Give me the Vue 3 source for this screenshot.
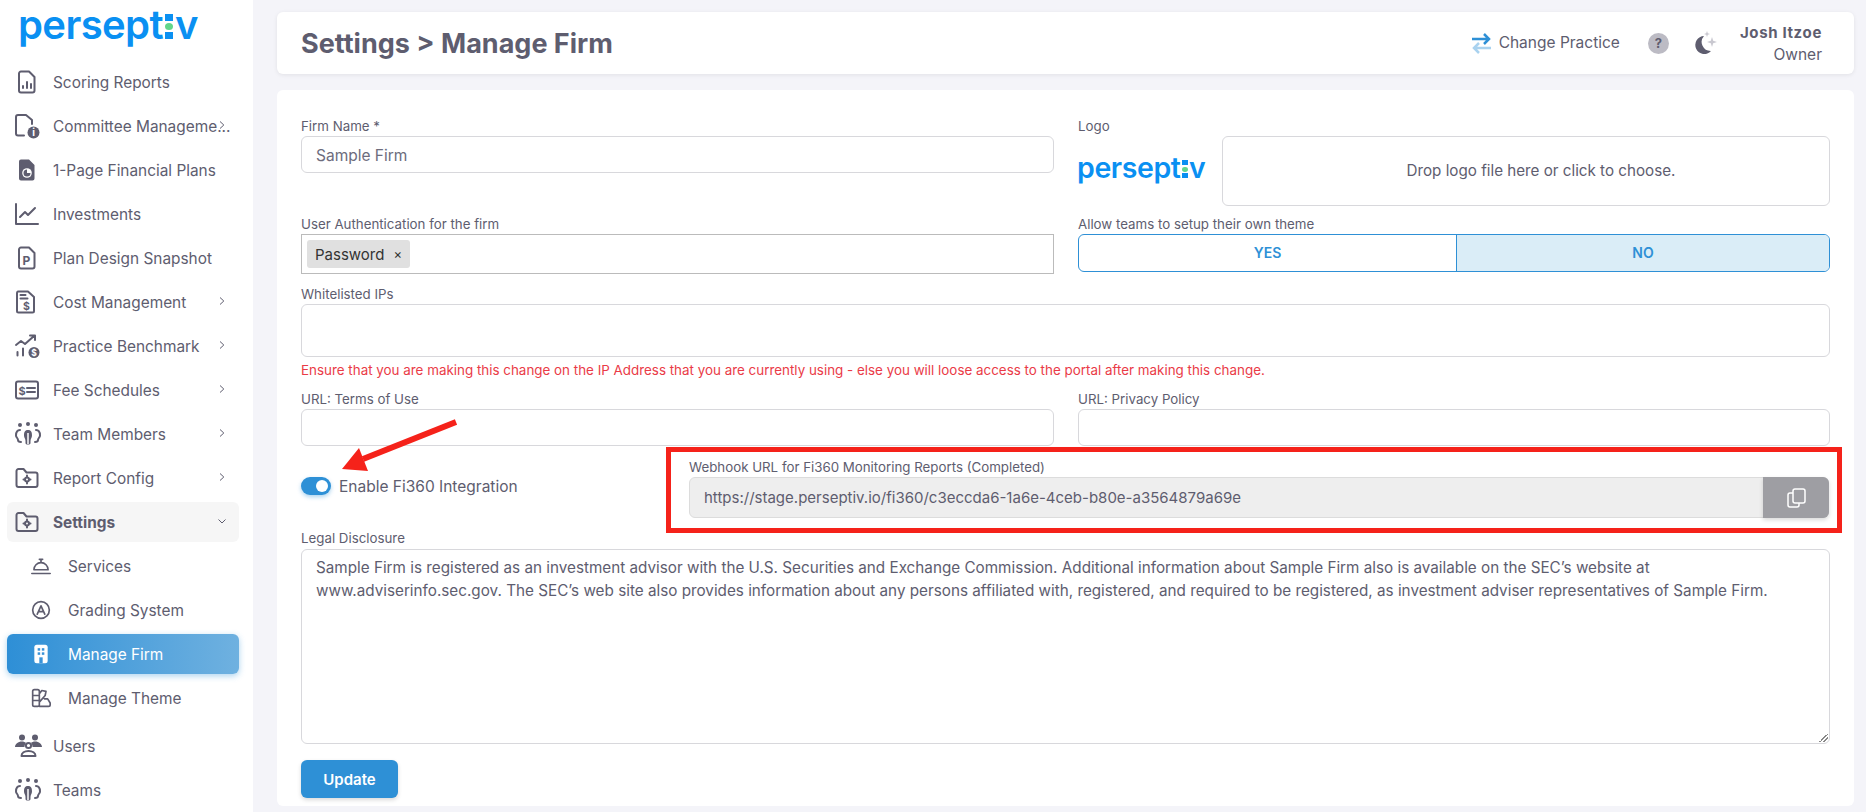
<template>
  <div class="page">
    <aside class="sidebar">
      <div class="logo logo-big">persept<span class="dots"><i></i><i class="green"></i><i></i></span>v</div>
      <nav class="nav">
        <div
          v-for="item in menu"
          :key="item.label"
          class="nav-item"
          :class="{ open: item.open, active: item.active, sub: item.sub }"
        >
          <svg class="nav-icon" viewBox="0 0 24 24" v-html="icons[item.icon]"></svg>
          <span class="nav-label">{{ item.label }}</span>
          <svg v-if="item.arrow" class="chev" viewBox="0 0 10 10">
            <path v-if="item.open" d="M1.5 3.5 5 7l3.5-3.5" />
            <path v-else d="M3 1.5 6.8 5 3 8.500" />
          </svg>
        </div>
      </nav>
    </aside>

    <main class="content">
      <header class="topbar">
        <h1>Settings &gt; Manage Firm</h1>
        <div class="top-right">
          <svg class="swap" viewBox="0 0 19 22">
            <path d="M0 7h17M12 2l5 5-5 5" stroke="#2e90d6" />
            <path d="M19 16H2M7 11l-5 5 5 5" stroke="#a9d2ef" />
          </svg>
          <span class="practice">Change Practice</span>
          <span class="help">?</span>
          <svg class="moon" viewBox="0 0 24 24">
            <path d="M11 5a9 9 0 1 0 7 15 9 9 0 0 1-7-15z" fill="#5e5d6f" />
            <path d="M14 0l.8 2.200L17 3l-2.200.8L14 6l-.8-2.200L11 3l2.200-.8zM19 6l1.200 3.800L24 11l-3.800 1.200L19 16l-1.200-3.800L14 11l3.800-1.200z" fill="#c9c8d0" />
          </svg>
          <div class="user">
            <b>Josh Itzoe</b>
            <span>Owner</span>
          </div>
        </div>
      </header>

      <section class="card">
        <div class="cols row-one">
          <div>
            <label>Firm Name *</label>
            <div class="input text-in">Sample Firm</div>
          </div>
          <div>
            <label>Logo</label>
            <div class="logo-row">
              <div class="logo logo-small">persept<span class="dots"><i></i><i class="green"></i><i></i></span>v</div>
              <div class="drop">Drop logo file here or click to choose.</div>
            </div>
          </div>
        </div>

        <div class="cols row-two">
          <div>
            <label>User Authentication for the firm</label>
            <div class="select">
              <span class="chip">Password <em>×</em></span>
            </div>
          </div>
          <div>
            <label>Allow teams to setup their own theme</label>
            <div class="yesno">
              <span>YES</span>
              <span class="picked">NO</span>
            </div>
          </div>
        </div>

        <label>Whitelisted IPs</label>
        <div class="input ips"></div>
        <p class="warn">Ensure that you are making this change on the IP Address that you are currently using - else you will loose access to the portal after making this change.</p>

        <div class="cols">
          <div>
            <label>URL: Terms of Use</label>
            <div class="input"></div>
          </div>
          <div>
            <label>URL: Privacy Policy</label>
            <div class="input"></div>
          </div>
        </div>

        <div class="fi360">
          <svg class="arrow" viewBox="0 0 125 60">
            <path d="M120 5 27 42" />
            <polygon points="6,52 23,31 32,54" />
          </svg>
          <div class="switch-wrap">
            <span class="switch"><i></i></span>
            <span class="switch-label">Enable Fi360 Integration</span>
          </div>
          <div class="webhook">
            <label>Webhook URL for Fi360 Monitoring Reports (Completed)</label>
            <div class="url-group">
              <span class="url">https://stage.perseptiv.io/fi360/c3eccda6-1a6e-4ceb-b80e-a3564879a69e</span>
              <span class="copy">
                <svg viewBox="0 0 24 24">
                  <rect x="9" y="3" width="12" height="14" rx="2" />
                  <path d="M9 7H6a2 2 0 0 0-2 2v10a2 2 0 0 0 2 2h7a2 2 0 0 0 2-2v-2" />
                </svg>
              </span>
            </div>
            <div class="redbox"></div>
          </div>
        </div>

        <label class="legal-label">Legal Disclosure</label>
        <div class="input legal">Sample Firm is registered as an investment advisor with the U.S. Securities and Exchange Commission. Additional information about Sample Firm also is available on the SEC’s website at www.adviserinfo.sec.gov. The SEC’s web site also provides information about any persons affiliated with, registered, and required to be registered, as investment adviser representatives of Sample Firm.</div>

        <button class="update" type="button">Update</button>
      </section>
    </main>
  </div>
</template>

<script setup>
const menu = [
  { label: "Scoring Reports", icon: "report" },
  { label: "Committee Manageme...", icon: "docinfo", arrow: true },
  { label: "1-Page Financial Plans", icon: "pie" },
  { label: "Investments", icon: "chart" },
  { label: "Plan Design Snapshot", icon: "docp" },
  { label: "Cost Management", icon: "cost", arrow: true },
  { label: "Practice Benchmark", icon: "bench", arrow: true },
  { label: "Fee Schedules", icon: "fee", arrow: true },
  { label: "Team Members", icon: "team", arrow: true },
  { label: "Report Config", icon: "folder", arrow: true },
  { label: "Settings", icon: "folder", arrow: true, open: true },
  { label: "Services", icon: "bell", sub: true },
  { label: "Grading System", icon: "grade", sub: true },
  { label: "Manage Firm", icon: "firm", sub: true, active: true },
  { label: "Manage Theme", icon: "theme", sub: true },
  { label: "Users", icon: "users" },
  { label: "Teams", icon: "team" }
];

const doc = "M6 1.500h8l5.500 5.500v13.500a2 2 0 0 1-2 2H6a2 2 0 0 1-2-2v-17a2 2 0 0 1 2-2z";
const teamBody = "M13 8c3.500 0 4 2.500 4 5.500 0 2.500-1.500 3-1.500 5.500v2c0 1-1 1.500-2.500 1.500s-2.500-.5-2.500-1.500v-2c0-2.500-1.500-3-1.500-5.500 0-3 .5-5.500 4-5.500z";

const icons = {
  report: `<path class="s" d="${doc}"/><path class="s" d="M8 18v-2M12 18v-6M16 18v-4"/>`,
  docinfo: `<path class="s" d="M9 21.500H3a2 2 0 0 1-2-2V3a2 2 0 0 1 2-2h8l6 5v4"/><circle cx="18.500" cy="18.500" r="6" class="f"/><text x="18.500" y="22" class="t" font-size="10">i</text>`,
  pie: `<path class="f" d="${doc}"/><circle cx="12" cy="15" r="4.800" fill="#fff"/><path class="f" d="M12 15v-3.500a3.500 3.500 0 1 0 3.500 3.500z"/>`,
  chart: `<path class="s" d="M1 2v20h22"/><path class="s" d="M5 15l5-5 3 3 7-7"/>`,
  docp: `<path class="s" d="${doc}"/><text x="11.500" y="18.500" class="t2" font-size="12">P</text>`,
  cost: `<path class="s" d="M3 1.500h10l6 5.500v14a1.500 1.500 0 0 1-1.500 1.500h-14A1.500 1.500 0 0 1 2 21V3a1.500 1.500 0 0 1 1-1.500z"/><path class="s" d="M5.500 5h5M5.500 8.500h7"/><text x="11.500" y="20" class="t2" font-size="10.500">$</text>`,
  bench: `<circle cx="19" cy="18.500" r="5.500" class="f"/><text x="19" y="21.500" class="t" font-size="8.500">$</text><path class="s" d="M1 11l5-4 4 3 9-8M15 1.500h5v4.500"/><path class="s" d="M2.500 18v3.500M8 14.500v7" stroke-width="3"/>`,
  fee: `<rect class="s" x="1" y="3.500" width="22" height="17" rx="2"/><text x="7" y="16.500" class="t2" font-size="11">$</text><path class="s" d="M12 10h8M12 14h8"/>`,
  team: `<circle cx="5" cy="3" r="2" class="f"/><circle cx="13" cy="2" r="2" class="f"/><circle cx="21" cy="3" r="2" class="f"/><path class="f" d="${teamBody}"/><path d="M13 11v11" stroke="#fff" stroke-width="1.500"/><path class="s" stroke-width="2.500" d="M5 8C1.500 8 1 11 1 13.500 1 15.500 3 16 3 18c0 1.500 1.500 2 3 2M21 8c3.500 0 4 3 4 5.500 0 2-2 2.500-2 4.500 0 1.500-1.500 2-3 2"/>`,
  folder: `<path class="s" d="M1.500 5a2 2 0 0 1 2-2h5l3 3.500h9a2 2 0 0 1 2 2V19a2 2 0 0 1-2 2h-17a2 2 0 0 1-2-2z"/><circle cx="12" cy="13.500" r="2" class="s" stroke-width="2.800"/><path class="s" d="M12 9.500v1M12 16.500v1M8.500 13.500h1M14.500 13.500h1" stroke-width="1.600"/>`,
  bell: `<path class="s" d="M1 21h22M3.500 16.500a8.500 8.500 0 0 1 17 0zM12 8V4M10 4h4" stroke-width="1.500"/>`,
  grade: `<circle cx="12" cy="12" r="10" class="s" stroke-width="1.800"/><path class="s" d="M7.500 17 12 7l4.500 10M9 14h6" stroke-width="1.800"/>`,
  firm: `<rect x="4" y="1" width="16" height="22" rx="3" fill="#fff"/><g fill="#3a93d8"><rect x="8" y="5" width="3" height="3"/><rect x="13" y="5" width="3" height="3"/><rect x="8" y="10" width="3" height="3"/><rect x="13" y="10" width="3" height="3"/><rect x="10" y="16" width="4" height="7"/></g>`,
  theme: `<path class="s" d="M2 4a2 2 0 0 1 2-2h4a2 2 0 0 1 2 2v16a2 2 0 0 1-2 2H4a2 2 0 0 1-2-2zM2 9h8M2 15h8M10 7l3-4 5 1-1 5-7 8M10 22h11a2 2 0 0 0 2-2v-2l-3-5h-4" stroke-width="1.700"/>`,
  users: `<circle cx="7" cy="3.500" r="3" class="f"/><circle cx="20" cy="3.500" r="3" class="f"/><path class="f" d="M0 13c0-3 3-5.500 7-5.500 1.500 0 3 .5 4 1.500-1 1-1.500 2.500-1.500 4zM27 13c0-3-3-5.500-7-5.500-1.500 0-3 .5-4 1.500 1 1 1.500 2.500 1.500 4z"/><circle cx="13.500" cy="11.500" r="2.600" class="s" stroke-width="1.800"/><path class="s" stroke-width="1.800" d="M6.500 22c0-3 3-5 7-5s7 2 7 5z"/>`
};
</script>

<style>
html,
body {
  margin: 0;
  background: #f4f4f9;
  overflow: hidden;
}
</style>

<style scoped>
.page {
  display: flex;
  height: 812px;
  overflow: hidden;
  font-family: Inter, "Open Sans", sans-serif;
  color: #5e5d6f;
  background: #f4f4f9;
}

.sidebar {
  width: 253px;
  flex: none;
  background: #fff;
  padding: 0 14px 0 7px;
  box-sizing: border-box;
}

.logo {
  font-family: Inter, sans-serif;
  font-weight: 600;
  color: #0a90f2;
  line-height: 1;
  white-space: nowrap;
}

.logo-big {
  font-size: 40px;
  letter-spacing: -0.6px;
  height: 62px;
  padding: 5px 0 0 11px;
  box-sizing: border-box;
}

.logo-small {
  font-size: 28.500px;
  width: 145px;
  flex: none;
  letter-spacing: -0.4px;
  margin-left: -1px;
  align-self: center;
  padding-bottom: 5px;
}

.dots {
  display: inline-block;
  width: 0.2em;
  margin: 0 0.05em;
  letter-spacing: 0;
}

.dots i {
  display: block;
  height: 0.175em;
  margin-top: 0.05em;
  background: #0a90f2;
}

.dots i.green {
  border-radius: 50%;
  background: #62d68b;
}

.nav-item {
  display: flex;
  align-items: center;
  height: 40px;
  margin-bottom: 4px;
  padding-left: 8px;
  position: relative;
  border-radius: 6px;
  font-size: 15.400px;
}

.nav-item:nth-last-child(2) {
  margin-top: 8px;
}

.nav-icon {
  width: 24px;
  height: 24px;
  flex: none;
  margin-right: 14px;
  overflow: visible;
}

.nav-icon :deep(.s) {
  fill: none;
  stroke: #5e5d6f;
  stroke-width: 2;
  stroke-linecap: round;
  stroke-linejoin: round;
}

.nav-icon :deep(.f) {
  fill: #5e5d6f;
}

.nav-icon :deep(.t),
.nav-icon :deep(.t2) {
  font-family: Inter, sans-serif;
  font-weight: 700;
  text-anchor: middle;
  fill: #fff;
}

.nav-icon :deep(.t2) {
  fill: #5e5d6f;
}

.nav-label {
  white-space: nowrap;
}

.chev {
  position: absolute;
  right: 12px;
  top: 14px;
  width: 10px;
  height: 10px;
  fill: none;
  stroke: #5e5d6f;
  stroke-width: 1;
}

.nav-item.open {
  background: #f6f6f6;
  font-weight: 700;
}

.nav-item.sub {
  padding-left: 24px;
}

.nav-item.sub .nav-icon {
  width: 20px;
  height: 20px;
  margin-right: 17px;
}

.nav-item.active {
  background: linear-gradient(90deg, #2e8fd6, #6fb1e0);
  color: #fff;
  box-shadow: 0 2px 6px rgba(46, 144, 214, 0.4);
}

.content {
  flex: 1;
  padding: 12px 12px 0 24px;
  min-width: 0;
}

.topbar {
  display: flex;
  align-items: center;
  justify-content: space-between;
  height: 62px;
  padding: 0 32px 0 24px;
  background: #fff;
  border-radius: 6px;
  box-shadow: 0 1px 4px rgba(0, 0, 0, 0.08);
}

h1 {
  margin: 0;
  font-size: 27px;
  font-weight: 700;
}

.top-right {
  display: flex;
  align-items: center;
  font-size: 15.500px;
}

.swap {
  width: 19px;
  height: 22px;
  margin-right: 8px;
  fill: none;
  stroke-width: 2.500;
}

.practice {
  margin-bottom: 2px;
}

.help {
  width: 21px;
  height: 21px;
  margin: 0 24px 0 28px;
  border-radius: 50%;
  background: #bcbbc4;
  font-size: 13px;
  font-weight: 700;
  text-align: center;
  line-height: 21px;
}

.moon {
  width: 24px;
  height: 24px;
  margin-right: 23px;
}

.user {
  display: flex;
  flex-direction: column;
  align-items: flex-end;
  gap: 5px;
  line-height: 17px;
  font-size: 15.500px;
}

.user b {
  font-size: 15px;
  letter-spacing: 0.65px;
}

.card {
  margin-top: 16px;
  height: 716px;
  box-sizing: border-box;
  padding: 26px 24px 0;
  background: #fff;
  border-radius: 6px;
}

label {
  display: block;
  height: 18px;
  margin-bottom: 2px;
  line-height: 20px;
  font-size: 13.300px;
}

.legal-label {
  line-height: 18px;
}

.cols {
  display: grid;
  grid-template-columns: 753px 752px;
  column-gap: 24px;
}

.row-one {
  height: 98px;
}

.row-two {
  height: 70px;
}

.input {
  box-sizing: border-box;
  height: 37px;
  border: 1px solid #d8d8dc;
  border-radius: 6px;
  background: #fff;
}

.text-in {
  padding: 0 14px;
  line-height: 37px;
  font-size: 15.500px;
  color: #6d6c7d;
}

.logo-row {
  display: flex;
}

.drop {
  flex: 1;
  height: 70px;
  box-sizing: border-box;
  padding-left: 30px;
  border: 1px solid #d8d8dc;
  border-radius: 6px;
  text-align: center;
  line-height: 68px;
  font-size: 15.200px;
}

.select {
  box-sizing: border-box;
  height: 40px;
  padding: 5px;
  border: 1px solid #bbb;
}

.chip {
  display: inline-flex;
  align-items: center;
  justify-content: space-between;
  box-sizing: border-box;
  width: 103px;
  height: 28px;
  padding: 0 8px;
  border-radius: 3px;
  background: #e0e0e0;
  color: #333;
  font-size: 15px;
}

.chip em {
  font-style: normal;
  font-size: 13px;
}

.yesno {
  display: grid;
  grid-template-columns: 377px 1fr;
  height: 38px;
  box-sizing: border-box;
  border: 1px solid #2e90d6;
  border-radius: 6px;
  overflow: hidden;
  color: #2e90d6;
  font-size: 14px;
  font-weight: 600;
  line-height: 36px;
  text-align: center;
}

.picked {
  background: #daedf7;
  border-left: 1px solid #2e90d6;
}

.ips {
  height: 53px;
}

.warn {
  margin: 3px 0 11px;
  height: 18px;
  line-height: 20px;
  font-size: 13.400px;
  color: #ea3b47;
}

.fi360 {
  position: relative;
  display: flex;
  height: 72px;
  margin-top: 11px;
}

.arrow {
  position: absolute;
  left: 35px;
  top: -40px;
  width: 125px;
  height: 60px;
}

.arrow path {
  stroke: #f5221a;
  stroke-width: 6;
  fill: none;
}

.arrow polygon {
  fill: #f5221a;
}

.switch-wrap {
  display: flex;
  align-items: center;
  width: 388px;
  height: 18px;
  margin-top: 20px;
  flex: none;
  font-size: 15.500px;
}

.switch {
  position: relative;
  width: 30px;
  height: 18px;
  margin-right: 8px;
  border-radius: 9px;
  background: #2e90d6;
  box-shadow: 0 2px 4px rgba(46, 144, 214, 0.4);
}

.switch i {
  position: absolute;
  right: 3px;
  top: 3px;
  width: 12px;
  height: 12px;
  border-radius: 50%;
  background: #fff;
}

.webhook {
  position: relative;
  flex: 1;
  align-self: flex-start;
  margin-right: 1px;
}

.url-group {
  display: flex;
  height: 41px;
  box-sizing: border-box;
  border: 1px solid #dcdcdc;
  border-radius: 6px;
  background: #eee;
}

.url {
  flex: 1;
  padding-left: 14px;
  line-height: 39px;
  font-size: 15px;
}

.copy {
  display: flex;
  align-items: center;
  justify-content: center;
  width: 66px;
  margin: -1px;
  border-radius: 0 6px 6px 0;
  background: #9e9ea3;
  box-shadow: 0 2px 4px rgba(0, 0, 0, 0.15);
}

.copy svg {
  width: 24px;
  height: 24px;
  fill: none;
  stroke: #fff;
  stroke-width: 1.500;
}

.redbox {
  position: absolute;
  left: -23px;
  right: -13px;
  top: -10px;
  bottom: -15px;
  border: 5px solid #f5221a;
  pointer-events: none;
}

.legal {
  position: relative;
  height: 195px;
  padding: 6px 14px;
  line-height: 23px;
  font-size: 15.250px;
}

.legal::after {
  content: "";
  position: absolute;
  right: 1px;
  bottom: 1px;
  width: 9px;
  height: 9px;
  background: linear-gradient(135deg, transparent 50%, #888 50%, #888 58%, transparent 58%, transparent 72%, #888 72%, #888 80%, transparent 80%);
}

.update {
  display: block;
  width: 97px;
  height: 38px;
  margin-top: 16px;
  border: none;
  border-radius: 6px;
  background: #2e90d6;
  color: #fff;
  font-family: inherit;
  font-size: 15px;
  font-weight: 600;
  box-shadow: 0 2px 4px rgba(0, 0, 0, 0.15);
}
</style>
